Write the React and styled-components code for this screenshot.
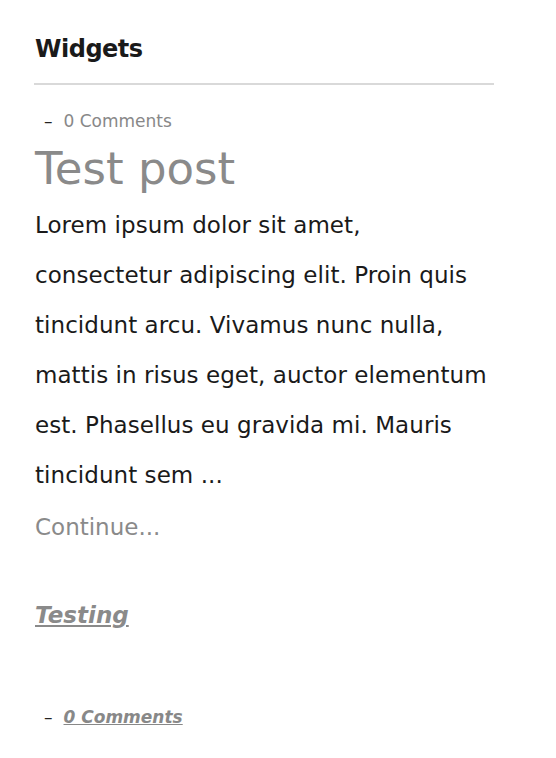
import React from 'react'
import styled, { createGlobalStyle } from 'styled-components'

const Global = createGlobalStyle`
    body {
        margin: 0;
        background: #fff;
        font-family: "DejaVu Sans", Verdana, sans-serif;
    }
`

const Page = styled.div`
    width: 460px;
    padding: 34px 0 0 34px;
`

const WidgetTitle = styled.h2`
    margin: 0;
    padding: 0 0 19px 1px;
    font-size: 24px;
    letter-spacing: -0.5px;
    font-weight: bold;
    color: #1a1a1a;
    line-height: 30px;
    border-bottom: 2px solid #d9d9d9;
`

const Meta = styled.div`
    margin: ${p => p.gap}px 0 0 10px;
    font-size: 17px;
    color: #888;
    line-height: 20px;
    & span { color: #222; margin-right: 11px; }
    & a {
        color: #888;
        text-decoration: ${p => p.linked ? 'underline' : 'none'};
        font-style: ${p => p.linked ? 'italic' : 'normal'};
        font-weight: ${p => p.linked ? 'bold' : 'normal'};
    }
`

const PostTitle = styled.h1`
    margin: 11px 0 0;
    padding-left: 1px;
    font-size: 45px;
    font-weight: normal;
    color: #8a8a8a;
    line-height: 54px;
`

const Body = styled.p`
    margin: 4px 0 0;
    padding-left: 1px;
    font-size: 23px;
    letter-spacing: 0.05px;
    line-height: 50px;
    color: #1a1a1a;
`

const Continue = styled.a`
    display: block;
    margin-top: 12px;
    padding-left: 1px;
    font-size: 23px;
    color: #8a8a8a;
    line-height: 30px;
    text-decoration: none;
`

const LinkTitle = styled.a`
    display: block;
    margin-top: 58px;
    padding-left: 1px;
    font-size: 23px;
    font-weight: bold;
    font-style: italic;
    color: #8a8a8a;
    text-decoration: underline;
    line-height: 30px;
`

const Post = styled.div`
    display: flex;
    flex-direction: column;
`

const App = () => (
    <Page>
        <Global />
        <WidgetTitle>Widgets</WidgetTitle>
        <Post>
            <Meta gap={26}><span>–</span><a>0 Comments</a></Meta>
            <PostTitle>Test post</PostTitle>
            <Body>
                Lorem ipsum dolor sit amet, consectetur adipiscing elit. Proin quis tincidunt arcu. Vivamus nunc nulla, mattis in risus eget, auctor elementum est. Phasellus eu gravida mi. Mauris tincidunt sem ...
            </Body>
            <Continue>Continue...</Continue>
        </Post>
        <Post>
            <LinkTitle>Testing</LinkTitle>
            <Meta linked gap={77}><span>–</span><a>0 Comments</a></Meta>
        </Post>
    </Page>
)

export default App
